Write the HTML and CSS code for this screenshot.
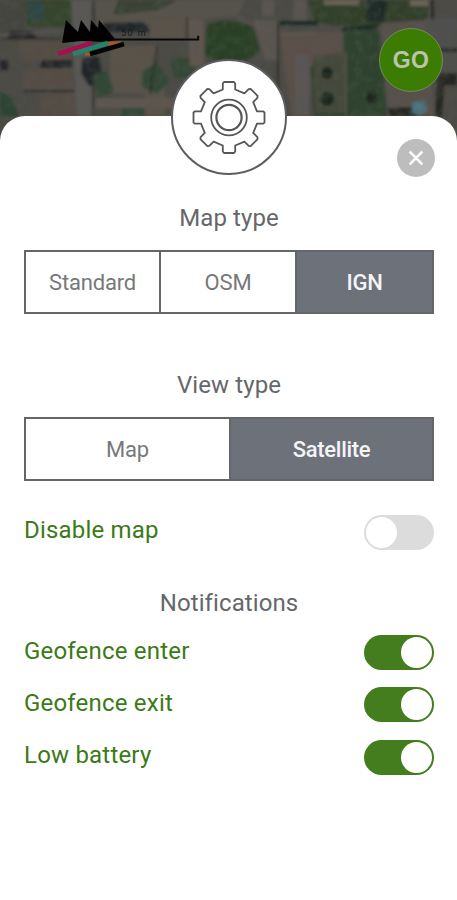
FILE: index.html
```html
<!DOCTYPE html>
<html lang="en">
<head>
<meta charset="utf-8">
<title>Map settings</title>
<link rel="stylesheet" href="styles.css">
</head>
<body>
<main class="screen">
  <header class="map">
    <svg class="aerial" viewBox="0 0 457 150" aria-hidden="true">
      <defs>
        <filter id="soft" x="-5%" y="-5%" width="110%" height="110%"><feGaussianBlur stdDeviation="1.5"/></filter>
        <filter id="grain" x="0" y="0" width="100%" height="100%">
          <feTurbulence type="fractalNoise" baseFrequency=".11" numOctaves="3" seed="8"/>
          <feColorMatrix values="0 0 0 0 .08  0 0 0 0 .1  0 0 0 0 .08  2.2 0 0 0 -.9"/>
        </filter>
      </defs>
      <rect width="457" height="150" fill="#4c4a45"/>
      <g filter="url(#soft)">
        <path fill="#44453f" d="M0 0h25v33H0z"/>
        <path fill="#34442f" d="M25 0h47v27H27z"/>
        <path fill="#2e4745" d="M28 2h16v17H28z"/>
        <path fill="#5a5854" d="M71 0h22v116H77z"/>
        <path fill="#57524c" d="M95 0h150l-8 16-139 12z"/>
        <path fill="#3b4235" d="M118 0h60l-20 10-45 5z"/>
        <path fill="#544d44" d="M20 40h52v22H20zM24 69h50v22H24zM40 93h36v23H40z"/>
        <path fill="#26282a" d="M10 31h22l5 7H8zM42 60h30v8H40zM0 60h8v10H0zM24 90h50v2H24z"/>
        <path fill="#2b4532" d="M0 93q15 0 18 23H0z"/>
        <path fill="#5a5248" d="M110 46h48l-8 47h-40zM150 18h36v21h-36zM145 86h20v30h-20z"/>
        <path fill="#23282a" d="M103 23l40-1 8 10h-47zM82 57h17l5 25-15 4-8-12z"/>
        <path fill="#304634" d="M93 74l14-3 7 20-17 9zM124 101h20v15h-23zM142 72l15-10 13 19-13 13-15-7zM170 58h24v20h-20z"/>
        <path fill="#5f5750" d="M96 98h78v10H96zM188 20h16v46h-14z"/>
        <path fill="#2b4128" d="M207 25q22-10 46 2l7 24-14 10h-31l-10-6z"/>
        <path fill="#5a554f" d="M253 20h26v40h-14zM294 0h12v20h-12zM262 0h12v16h-12z"/>
        <path fill="#5c4f49" d="M280 32h62v20l-29 4-5 60h-16l-8-53z"/>
        <path fill="#5a5755" d="M295 55h14v61h-13z"/>
        <path fill="#32402c" d="M308 0h120v25l-83 2-30-5z"/>
        <path fill="#6d6557" d="M324 0h35v5h-35zM410 0h18v6h-18z"/>
        <path fill="#1d2927" d="M368 0h20l-5 22h-17zM280 21h38v4h-38zM343 28l35-4-2 5-35 3z"/>
        <path fill="#2f422f" d="M344 30h35l8 86h-73l-4-49 34-15z"/>
        <path fill="#45483a" d="M313 60l33-9v62h-31z"/>
        <path fill="#58514b" d="M381 23l46-3 7 96h-45z"/>
        <path fill="#50504e" d="M425 18h32v57h-23z"/>
        <path fill="#262624" d="M438 73h19v12h-13l-2 31h-7zM431 0h3v20h-3zM388 108l23-1 6 9h-27zM439 48h18v4h-17z"/>
        <circle cx="327" cy="73" r="6" fill="#1c281f"/>
        <circle cx="327" cy="99" r="7" fill="#1c281f"/>
        <circle cx="371" cy="97" r="6" fill="#1c281f"/>
        <path fill="#4d7582" d="M413 102l12-1 2 10-7 4-8-2z"/>
        <path fill="none" stroke="#292724" stroke-width="1.5" d="M187 17v22M278 20v95M0 39h62M93 0v116M157 46l-7 48"/>
        <path fill="none" stroke="#64605a" d="M0 35l60-4M237 17l31 14M346 53v62M281 35l35-2"/>
      </g>
      <rect width="457" height="150" filter="url(#grain)" opacity=".35"/>
      <path d="M114 39.6h84.200v-3.800" fill="none" stroke="#080808" stroke-width="2"/>
      <text class="scale" x="121" y="35.500">50 m</text>
      <path d="M62 43L66 20l12 12 3-12 9 12 1-12 7 8 1-8 17 20-9 2-26-1z" fill="#000"/>
      <path d="M108 43.500h13" stroke="#a6582b" stroke-width="4"/>
      <path d="M58 54l34-11" stroke="#a80e50" stroke-width="4.5"/>
      <path d="M73 54l35-11" stroke="#22856b" stroke-width="4.5"/>
      <path d="M85 54h9" stroke="#a6582b" stroke-width="3"/>
      <path d="M90 54l34-10" stroke="#050505" stroke-width="4.5"/>
    </svg>
    <button class="go">GO</button>
  </header>
  <section class="sheet">
    <div class="badge">
      <svg viewBox="-40 -40.5 80 80" width="80" height="80" fill="none" stroke="#555658" stroke-width="1.8" stroke-linejoin="round">
        <path d="M-6.2-28V-34L-5-35.5H5L6.2-34V-28L15.4-24.2 19.7-28.4 21.6-28.6 28.6-21.6 28.4-19.7 24.2-15.4 28-6.2H34L35.5-5V5L34 6.2H28L24.2 15.4 28.4 19.7 28.6 21.6 21.6 28.6 19.7 28.4 15.4 24.2 6.2 28V34L5 35.5H-5L-6.2 34V28L-15.4 24.2-19.7 28.4-21.6 28.6-28.6 21.6-28.4 19.7-24.2 15.4-28 6.2H-34L-35.5 5V-5L-34-6.2H-28L-24.2-15.4-28.4-19.7-28.6-21.6-21.6-28.6-19.7-28.4-15.4-24.2Z"/>
        <circle r="17.8"/><circle r="12.6" stroke-width="2.2"/>
      </svg>
    </div>
    <button class="close" aria-label="Close">
      <svg viewBox="0 0 38 38" width="38" height="38"><path d="M12.7 12.7l12.6 12.6M25.3 12.7L12.7 25.3" stroke="#fff" stroke-width="2.6"/></svg>
    </button>
    <h2 class="title">Map type</h2>
    <div class="segments three">
      <button>Standard</button><button>OSM</button><button class="active">IGN</button>
    </div>
    <h2 class="title view">View type</h2>
    <div class="segments two">
      <button>Map</button><button class="active">Satellite</button>
    </div>
    <div class="row disable"><span>Disable map</span><i class="switch"></i></div>
    <h2 class="title notifications">Notifications</h2>
    <div class="row"><span>Geofence enter</span><i class="switch on"></i></div>
    <div class="row"><span>Geofence exit</span><i class="switch on"></i></div>
    <div class="row"><span>Low battery</span><i class="switch on"></i></div>
  </section>
</main>
</body>
</html>
```
FILE: styles.css
```css
* { box-sizing: border-box; }
body { margin: 0; font-family: Roboto, sans-serif; background: #fff; }
button { border: 0; padding: 0; margin: 0; font: inherit; }
.screen { width: 457px; height: 900px; overflow: hidden; }
.map { position: relative; height: 116px; }
.aerial { position: absolute; left: 0; top: 0; width: 457px; height: 150px; }
.scale { font: 9px Roboto, sans-serif; letter-spacing: 1.5px; fill: #171717; }
.go {
  position: absolute; left: 379px; top: 28px; width: 64px; height: 64px;
  border-radius: 50%; border: 1px solid #6f8f58; background: #3d7c02;
  color: #b9c6ad; font: 700 23px "Liberation Sans", sans-serif; letter-spacing: .3px;
}
.sheet {
  position: relative; height: 784px; padding: 85px 23px 0 24px;
  border-radius: 25px 25px 0 0; background: #fff;
}
.badge {
  position: absolute; left: 171px; top: -57px; width: 116px; height: 116px;
  display: flex; align-items: center; justify-content: center;
  border: 2.5px solid #5b5d60; border-radius: 50%; background: #fff;
}
.close {
  position: absolute; left: 397px; top: 23px; width: 38px; height: 38px;
  border-radius: 50%; background: #bdbdbd;
}
.close svg { display: block; }
.title {
  margin: 0; height: 34px; line-height: 34px; text-align: center;
  font-size: 24px; font-weight: 400; letter-spacing: .1px; color: #66676a;
}
.segments {
  display: grid; height: 64px; margin-top: 15px;
  border: 2px solid #646669; background: #fff;
}
.three { grid-template-columns: 133px 136px 1fr; }
.two { grid-template-columns: 1fr 1fr; }
.segments button {
  background: #fff; color: #77787b; font-size: 22px; letter-spacing: -.2px;
}
.segments button + button { border-left: 2px solid #646669; }
.segments .active { background: #6c717a; color: #f4f4f7; font-weight: 500; letter-spacing: -.3px; }
.view { margin-top: 54px; }
.disable { margin-top: 25px; }
.row {
  display: flex; align-items: center; justify-content: space-between;
  height: 52.4px; color: #3b7a17; font-size: 24px; letter-spacing: .2px;
}
.row span { margin-top: -4px; }
.switch { width: 70px; height: 35px; padding: 2px; border-radius: 18px; background: #dcdcdc; }
.switch::before { content: ""; display: block; width: 31px; height: 31px; border-radius: 50%; background: #fff; }
.switch.on { background: #447d1d; }
.switch.on::before { margin-left: auto; }
.notifications { margin-top: 28px; margin-bottom: 6px; }
```
